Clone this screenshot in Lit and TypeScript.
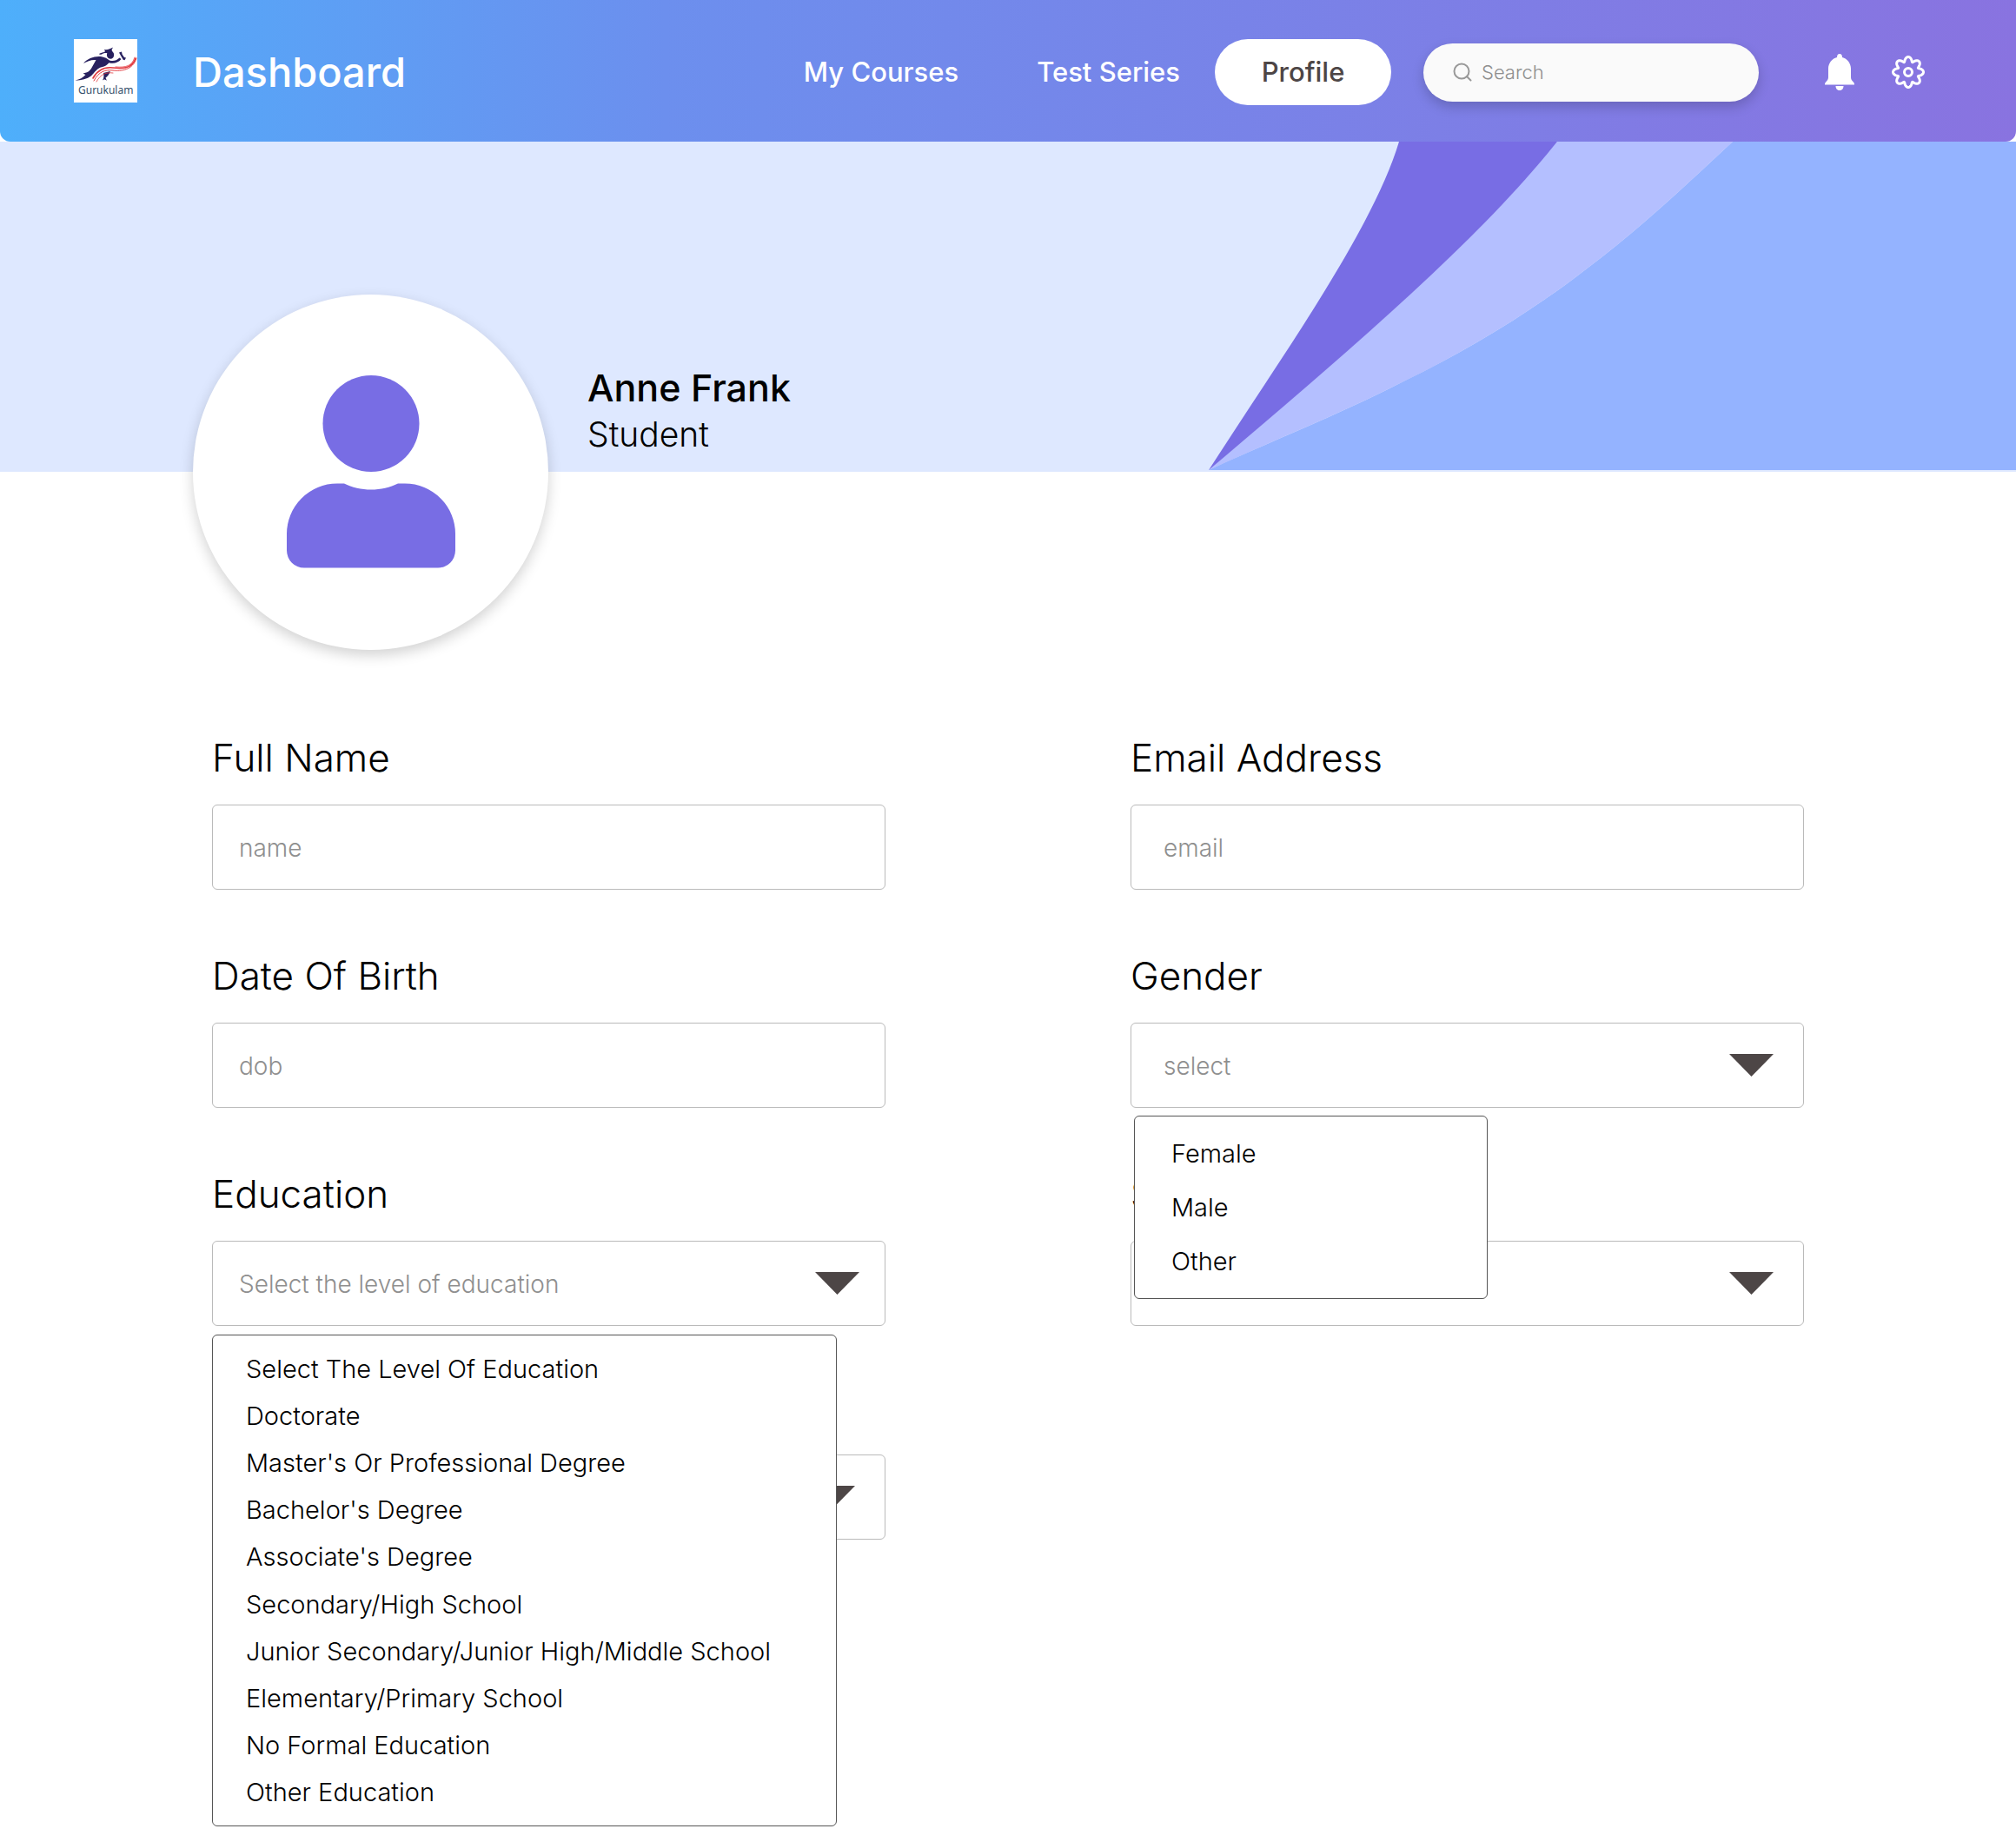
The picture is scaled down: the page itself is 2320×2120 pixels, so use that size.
import { LitElement, html, svg, css, nothing } from "lit";
import { customElement, property } from "lit/decorators.js";
import { classMap } from "lit/directives/class-map.js";

type Field = {
  id: string;
  label: string;
  placeholder: string;
  kind: "text" | "select";
  inset?: boolean;
  options?: string[];
  menu?: "short" | "long";
};

const FIELDS: Field[] = [
  { id: "name", label: "Full Name", placeholder: "name", kind: "text" },
  { id: "email", label: "Email Address", placeholder: "email", kind: "text", inset: true },
  { id: "dob", label: "Date Of Birth", placeholder: "dob", kind: "text" },
  {
    id: "gender",
    label: "Gender",
    placeholder: "select",
    kind: "select",
    inset: true,
    menu: "short",
    options: ["Female", "Male", "Other"],
  },
  {
    id: "education",
    label: "Education",
    placeholder: "Select the level of education",
    kind: "select",
    menu: "long",
    options: [
      "Select The Level Of Education",
      "Doctorate",
      "Master's Or Professional Degree",
      "Bachelor's Degree",
      "Associate's Degree",
      "Secondary/High School",
      "Junior Secondary/Junior High/Middle School",
      "Elementary/Primary School",
      "No Formal Education",
      "Other Education",
    ],
  },
  { id: "state", label: "State", placeholder: "select", kind: "select", inset: true },
];

const EXTRA_FIELDS: Field[] = [
  { id: "stream", label: "Stream", placeholder: "select", kind: "select", inset: true },
];

/** Closed outline of a cog with soft, rounded teeth. */
function cogPath(cx: number, cy: number, radius: number, depth: number, teeth: number): string {
  const points: string[] = [];
  const steps = teeth * 24;
  for (let i = 0; i < steps; i++) {
    const t = (i / steps) * Math.PI * 2;
    const r = radius + depth * Math.cos(teeth * t);
    const a = t + 0.05 * Math.sin(teeth * t);
    points.push(`${(cx + r * Math.sin(a)).toFixed(2)} ${(cy - r * Math.cos(a)).toFixed(2)}`);
  }
  return `M${points.join("L")}Z`;
}

const logo = svg`
  <svg class="logo" viewBox="0 0 73 73" role="img" aria-label="Gurukulam">
    <rect width="73" height="73" fill="#fff" />
    <g fill="#28215f">
      <path d="M29 17c2-1 4-2 6-2l1-1-1-2c4 .6 7-1 10-2.500l-1.500 3 1 2c2 1.500 2.300 5 .5 7-2 2-5 1.500-6.500-1-.8-1.500-.6-3-.2-4.300-2-.4-4 .2-6.300 1.200-1.200.7-2.200.6-3-.4z" />
      <path d="M11 28c5-6 14-9 22-7.500l4 1.300 4 2.700c4 1.200 8 .6 11.500-3l2 1.500c-3.500 4.500-9 5.500-14 4.200-2.500 2.500-4.500 4.500-8.500 5-5 1-8 6-12 10-5 4-11 5-18.500 5.300 5-1 9-3 12-6.500l-3-1.500c6-1 8-3 10-6.500l5-9c-5-.6-10 1.200-14.500 4z" />
      <path d="M52 15.500l3-1 .6 3 2.400 3.500 2 .6-1.500 2.700-1.800-.6-3-5.200z" />
      <path d="M34 39l8-2c-1.500 4-4 6.500-5.500 7.500L38 48c-2-1.500-3-2-5-.5 2-3 1.500-6 1-8.500z" />
    </g>
    <g fill="none" stroke="#e23a3f" stroke-linecap="round">
      <path stroke-width="1.600" d="M22 45c6-11 14-13 23-12s22 2 26-11" />
      <path stroke-width="1" d="M23 48c6-11 13-13 22-12s23 0 27-14" />
      <path stroke-width=".8" d="M26 49c5-9 11-11 19-10" />
      <path stroke-width=".8" d="M48 32c12 1 19-1 22-11" />
    </g>
    <text x="5" y="63" class="logo-text">Gurukulam</text>
  </svg>`;

const searchIcon = svg`
  <svg class="search-icon" viewBox="0 0 22 22" aria-hidden="true">
    <g fill="none" stroke="#999" stroke-width="2" stroke-linecap="round">
      <circle cx="10" cy="10" r="8.500" />
      <path d="M16 16l4.500 4.500" />
    </g>
  </svg>`;

const bellIcon = svg`
  <svg class="bell" viewBox="0 0 34 42" aria-hidden="true">
    <path fill="#fff" d="M17 0c2 0 3 1.500 3 4 6 1.500 10 7 10 13v10c0 2 .8 3 2 4.500 1.400 1.500 2 2 2 4.100H0c0-2.100.6-2.600 2-4.100C3.200 30 4 29 4 27V17C4 11 8 5.500 14 4c0-2.500 1-4 3-4z" />
    <path fill="#fff" d="M12.500 37h9c0 3-2 5-4.500 5s-4.500-2-4.500-5z" />
  </svg>`;

const gearIcon = svg`
  <svg class="gear" viewBox="0 0 38 38" aria-hidden="true">
    <g fill="none" stroke="#fff" stroke-width="3" stroke-linejoin="round">
      <path d=${cogPath(19, 19, 14.9, 2.6, 8)} />
      <circle cx="19" cy="19" r="4.500" />
    </g>
  </svg>`;

const swoosh = svg`
  <svg class="swoosh" viewBox="0 0 930 380" preserveAspectRatio="xMaxYMid meet" aria-hidden="true">
    <path fill="#b4bfff" d="M1 378C170 235 315 110 402 0H604C400 180 300 240 227 275z" />
    <path fill="#94b3ff" d="M1 378C60 350 150 315 227 275 297 241 372 196 435 147 500 98 550 50 604 0H930V378z" />
    <path fill="#b4bfff" d="M1 378C170 235 315 110 402 0H604C550 50 500 98 435 147 372 196 297 241 227 275 150 315 60 350 1 378z" />
    <path fill="#786de4" d="M1 378C90 240 190 100 220 0H402C315 110 170 235 1 378z" />
  </svg>`;

const personIcon = svg`
  <svg class="person" viewBox="0 0 194 222" role="img" aria-label="Profile picture">
    <g fill="#786de4">
      <circle cx="97" cy="55.500" r="55.500" />
      <path d="M58 124.500h8c9 4.500 20 7 31 7s22-2.500 31-7h8a58 58 0 0 1 58 58.500v18.500a20 20 0 0 1-20 20H20a20 20 0 0 1-20-20V183a58 58 0 0 1 58-58.500z" />
    </g>
  </svg>`;

@customElement("form-field")
export class FormField extends LitElement {
  @property({ attribute: false }) field!: Field;

  static styles = css`
    :host {
      display: block;
    }
    .label {
      display: block;
      margin-bottom: 27px;
      font-size: 44px;
      line-height: 54px;
      font-weight: 300;
      color: #000;
    }
    .box {
      position: relative;
    }
    .control {
      display: block;
      box-sizing: border-box;
      width: 100%;
      height: 98px;
      margin: 0;
      padding: 2px 30px 0;
      border: 1px solid #bababa;
      border-radius: 6px;
      background: #fff;
      appearance: none;
      font-family: inherit;
      font-size: 28px;
      font-weight: 300;
      color: #8f8f8f;
    }
    .control::placeholder {
      color: #8f8f8f;
      opacity: 1;
    }
    .inset .control {
      padding: 2px 37px 0;
    }
    .arrow {
      position: absolute;
      top: 36px;
      right: 30px;
      width: 51px;
      height: 26px;
      pointer-events: none;
    }
    .inset .arrow {
      right: 35px;
    }
    .menu {
      position: absolute;
      z-index: 2;
      top: calc(100% + 9px);
      box-sizing: border-box;
      display: grid;
      grid-auto-rows: 1fr;
      margin: 0;
      padding: 11px 0;
      list-style: none;
      border: 1px solid #555;
      border-radius: 6px;
      background: #fff;
      font-size: 29px;
      font-weight: 300;
      color: #000;
    }
    .short {
      left: 4px;
      width: 407px;
      min-height: 211px;
    }
    .long {
      top: calc(100% + 10px);
      left: 0;
      width: 719px;
      max-width: 100%;
      min-height: 566px;
    }
    .option {
      display: flex;
      align-items: center;
      padding: 0 38px;
    }
    .short .option {
      padding: 0 42px;
    }
  `;

  render() {
    const f = this.field;
    return html`
      <label class="label" for=${f.id}>${f.label}</label>
      <div class=${classMap({ box: true, inset: !!f.inset })}>
        ${f.kind === "text"
          ? html`<input class="control" id=${f.id} type="text" placeholder=${f.placeholder} />`
          : html`
              <select class="control" id=${f.id}>
                <option value="">${f.placeholder}</option>
                ${(f.options ?? []).map((o) => html`<option>${o}</option>`)}
              </select>
              <svg class="arrow" viewBox="0 0 51 26" aria-hidden="true">
                <path fill="#4d4646" d="M0 0H51L25.500 26z" />
              </svg>
            `}
        ${f.menu
          ? html`<ul class="menu ${f.menu}" role="listbox" aria-label=${f.label}>
              ${f.options!.map((o) => html`<li class="option" role="option">${o}</li>`)}
            </ul>`
          : nothing}
      </div>
    `;
  }
}

@customElement("app-root")
export class AppRoot extends LitElement {
  static styles = css`
    :host {
      display: block;
      min-height: 100vh;
      background: #fff;
      font-family: Inter, "Liberation Sans", sans-serif;
      color: #000;
    }
    .header {
      position: relative;
      z-index: 1;
      display: flex;
      align-items: center;
      padding: 45px 105px 42px 85px;
      border-radius: 0 0 12px 12px;
      background: linear-gradient(90deg, #4eaffb 0%, #6c8fee 33%, #8973e0 100%);
    }
    .logo {
      flex: none;
      align-self: flex-start;
      width: 73px;
      height: 73px;
    }
    .logo-text {
      font-family: "Noto Sans", sans-serif;
      font-size: 12px;
      fill: #35506b;
    }
    .title {
      margin: 0 0 0 64px;
      font-size: 47px;
      line-height: 58px;
      font-weight: 500;
      color: #fff;
    }
    .nav {
      display: flex;
      align-items: center;
      gap: 40px;
      margin-left: auto;
    }
    .link {
      padding-left: 50px;
      font-size: 31px;
      line-height: 76px;
      font-weight: 500;
      color: #fff;
      text-decoration: none;
      white-space: nowrap;
    }
    .current {
      box-sizing: border-box;
      min-width: 203px;
      padding: 0 50px;
      border-radius: 38px;
      background: #fff;
      color: #4d4646;
      text-align: center;
    }
    .search {
      display: flex;
      align-items: center;
      gap: 11px;
      box-sizing: border-box;
      width: 386px;
      height: 67px;
      margin-left: 37px;
      padding: 0 34px;
      border-radius: 34px;
      background: #fafafa;
      box-shadow: 0 6px 14px rgba(0, 0, 0, 0.18);
    }
    .search-icon {
      flex: none;
      width: 22px;
      height: 22px;
    }
    .search-input {
      flex: 1;
      min-width: 0;
      padding: 0;
      border: 0;
      outline: 0;
      background: none;
      font-family: inherit;
      font-size: 22px;
      font-weight: 300;
      color: #8f8f8f;
    }
    .search-input::placeholder {
      color: #8f8f8f;
      opacity: 1;
    }
    .actions {
      display: flex;
      align-items: center;
      gap: 43px;
      margin-left: 76px;
    }
    .action {
      display: block;
      padding: 0;
      border: 0;
      background: none;
      line-height: 0;
    }
    .bell {
      width: 34px;
      height: 42px;
    }
    .gear {
      width: 38px;
      height: 38px;
    }
    .banner {
      position: relative;
      height: 380px;
      background: #dee8ff;
    }
    .swoosh {
      position: absolute;
      top: 0;
      right: 0;
      height: 100%;
      max-width: 60%;
    }
    .identity {
      position: relative;
      display: flex;
      gap: 45px;
      margin-top: -204px;
      padding: 0 222px;
    }
    .avatar {
      flex: none;
      display: flex;
      justify-content: center;
      box-sizing: border-box;
      width: 409px;
      height: 409px;
      padding-top: 93px;
      border-radius: 50%;
      background: #fff;
      box-shadow: 0 6px 16px rgba(0, 0, 0, 0.18);
    }
    .person {
      width: 194px;
      height: 222px;
    }
    .who {
      padding-top: 80px;
    }
    .name {
      margin: 0;
      font-size: 43px;
      line-height: 54px;
      font-weight: 500;
    }
    .role {
      margin: 0;
      font-size: 39px;
      line-height: 54px;
      font-weight: 300;
    }
    .form {
      padding: 97px 244px 0;
    }
    .fields {
      display: grid;
      grid-template-columns: repeat(2, minmax(0, 1fr));
      gap: 72px 282px;
    }
    .fields + .fields {
      margin-top: 67px;
    }
    @media (max-width: 1700px) {
      .header {
        flex-wrap: wrap;
        gap: 24px;
      }
      .identity,
      .form {
        padding-left: 64px;
        padding-right: 64px;
      }
      .fields {
        column-gap: 64px;
      }
    }
  `;

  render() {
    return html`
      <header class="header">
        ${logo}
        <h1 class="title">Dashboard</h1>
        <nav class="nav" aria-label="Main">
          <a class="link" href="#courses">My Courses</a>
          <a class="link" href="#tests">Test Series</a>
          <a class="link current" href="#profile" aria-current="page">Profile</a>
        </nav>
        <label class="search">
          ${searchIcon}
          <input class="search-input" type="search" placeholder="Search" aria-label="Search" />
        </label>
        <div class="actions">
          <button class="action" type="button" aria-label="Notifications">${bellIcon}</button>
          <button class="action" type="button" aria-label="Settings">${gearIcon}</button>
        </div>
      </header>
      <main>
        <div class="banner">${swoosh}</div>
        <section class="identity">
          <div class="avatar">${personIcon}</div>
          <div class="who">
            <h2 class="name">Anne Frank</h2>
            <p class="role">Student</p>
          </div>
        </section>
        <form class="form">
          <div class="fields">
            ${FIELDS.map((f) => html`<form-field .field=${f}></form-field>`)}
          </div>
          <div class="fields">
            ${EXTRA_FIELDS.map((f) => html`<form-field .field=${f}></form-field>`)}
          </div>
        </form>
      </main>
    `;
  }
}
